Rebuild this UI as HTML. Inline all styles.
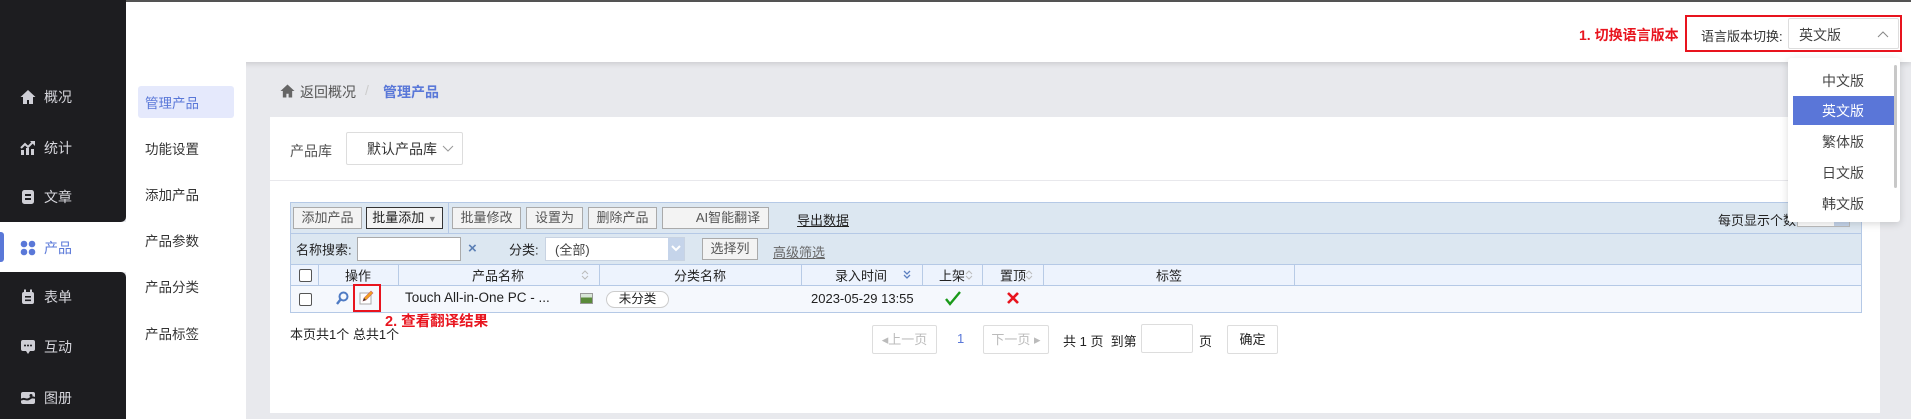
<!DOCTYPE html>
<html><head><meta charset="utf-8"><style>
*{margin:0;padding:0;box-sizing:border-box}
body{width:1911px;height:419px;overflow:hidden;background:#e8e9ed;font-family:"Liberation Sans","Noto Sans CJK SC",sans-serif;position:relative;color:#333}
.a{position:absolute;white-space:nowrap}
.topline{left:0;top:0;width:1911px;height:2px;background:#555}
.hdr{left:126px;top:2px;width:1785px;height:60px;background:#fff;box-shadow:0 2px 5px rgba(0,0,0,.12)}
.dk{background:#1d1d20;left:0;width:126px}
.nav{left:44px;font-size:14px;color:#d6d6dc;transform:translateY(-50%)}
.ic{left:20px;width:16px;height:16px;transform:translateY(-50%)}
.sub{left:126px;top:62px;width:120px;height:357px;background:#fff}
.si{left:145px;font-size:13.5px;color:#333;transform:translateY(-50%)}
.card{left:270px;top:117px;width:1610px;height:296px;background:#fff}
.btn{height:22px;border:1px solid #aaa;background:#f3f3f3;font-size:13px;color:#555;text-align:center;line-height:20px;top:207px}
.t13{font-size:13px;color:#222;transform:translateY(-50%)}
.vl{width:1px;background:#b8cbe6;top:265px;height:20px}
.dd{font-size:14px;color:#444;left:1788px;width:110px;text-align:center;transform:translateY(-50%)}
.pb{height:29px;border:1px solid #ddd;border-radius:2px;top:325px;font-size:13px;color:#bbb;text-align:center;line-height:27px;background:#fff}
.so{width:8px;height:12px}
</style></head><body>
<div class="a topline"></div>
<div class="a hdr"></div>
<div class="a dk" style="top:0;height:222px;border-bottom-right-radius:5px"></div>
<div class="a" style="left:0;top:222px;width:126px;height:50px;background:#fff"></div>
<div class="a dk" style="top:272px;height:147px;border-top-right-radius:5px"></div>
<div class="a" style="left:0;top:232px;width:4px;height:30px;background:#5a78d8;border-radius:0 3px 3px 0"></div>
<svg class="a ic" style="top:97px" viewBox="0 0 16 16"><path d="M8 1L0.5 8H3v7h4v-4h2v4h4V8h2.5z" fill="#cfcfd6"/></svg>
<div class="a nav" style="top:97px">概况</div>
<svg class="a ic" style="top:148px" viewBox="0 0 16 16" fill="#cfcfd6"><rect x="1" y="10" width="3" height="5"/><rect x="6" y="8" width="3" height="7"/><rect x="11" y="9" width="3" height="6"/><path d="M1 8l4-4 3 3 5-5" stroke="#cfcfd6" stroke-width="2" fill="none"/><path d="M10 1h5v5z"/></svg>
<div class="a nav" style="top:148px">统计</div>
<svg class="a ic" style="top:197px" viewBox="0 0 16 16"><rect x="2" y="1" width="12" height="14" rx="2.5" fill="#cfcfd6"/><rect x="5" y="5" width="6" height="2" fill="#1d1d20"/><rect x="5" y="9" width="6" height="2" fill="#1d1d20"/></svg>
<div class="a nav" style="top:197px">文章</div>
<svg class="a ic" style="top:248px" viewBox="0 0 16 16" fill="#5a78d8"><circle cx="4" cy="4" r="3.3"/><circle cx="12" cy="4" r="3.3"/><circle cx="4" cy="12" r="3.3"/><circle cx="12" cy="12" r="3.3"/></svg>
<div class="a nav" style="top:248px;color:#5a78d8">产品</div>
<svg class="a ic" style="top:297px" viewBox="0 0 16 16"><rect x="2" y="3" width="12" height="12" rx="2" fill="#cfcfd6"/><rect x="4" y="0.5" width="2" height="4" fill="#cfcfd6"/><rect x="10" y="0.5" width="2" height="4" fill="#cfcfd6"/><rect x="5" y="7" width="6" height="1.6" fill="#1d1d20"/><rect x="5" y="10.5" width="6" height="1.6" fill="#1d1d20"/></svg>
<div class="a nav" style="top:297px">表单</div>
<svg class="a ic" style="top:347px" viewBox="0 0 16 16"><path d="M1 3a2 2 0 012-2h10a2 2 0 012 2v7a2 2 0 01-2 2h-3l-2 3-2-3H3a2 2 0 01-2-2z" fill="#cfcfd6"/><circle cx="5" cy="6.5" r="1" fill="#1d1d20"/><circle cx="8" cy="6.5" r="1" fill="#1d1d20"/><circle cx="11" cy="6.5" r="1" fill="#1d1d20"/></svg>
<div class="a nav" style="top:347px">互动</div>
<svg class="a ic" style="top:398px" viewBox="0 0 16 16"><rect x="1" y="2" width="14" height="12" rx="2" fill="#cfcfd6"/><path d="M1 10c3-3 5 1 8-1s4-2 6-1" stroke="#1d1d20" stroke-width="2" fill="none"/><circle cx="11" cy="5.5" r="1.5" fill="#1d1d20"/></svg>
<div class="a nav" style="top:398px">图册</div>
<div class="a sub"></div>
<div class="a" style="left:138px;top:86px;width:96px;height:32px;background:#e5e9fc;border-radius:3px"></div>
<div class="a si" style="top:102px;color:#5a78d8">管理产品</div>
<div class="a si" style="top:148px">功能设置</div>
<div class="a si" style="top:194px">添加产品</div>
<div class="a si" style="top:240px">产品参数</div>
<div class="a si" style="top:286px">产品分类</div>
<div class="a si" style="top:333px">产品标签</div>
<svg class="a" style="left:280px;top:84px;width:15px;height:14px" viewBox="0 0 16 15"><path d="M8 0.5L0.5 7.5H3V14.5h3.8v-4h2.4v4H13V7.5h2.5z" fill="#666"/></svg>
<div class="a" style="left:300px;top:82px;font-size:14px;color:#555">返回概况</div>
<div class="a" style="left:365px;top:82px;font-size:14px;color:#ccc">/</div>
<div class="a" style="left:383px;top:82px;font-size:14px;color:#5a78d8;font-weight:bold">管理产品</div>
<div class="a card"></div>
<div class="a t13" style="left:290px;top:151px;color:#555;font-size:14px">产品库</div>
<div class="a" style="left:346px;top:132px;width:117px;height:33px;border:1px solid #ddd;border-radius:2px"></div>
<div class="a t13" style="left:367px;top:149px;font-size:14px;color:#333">默认产品库</div>
<svg class="a" style="left:442px;top:145px;width:12px;height:8px" viewBox="0 0 12 8"><path d="M1 1l5 5 5-5" stroke="#999" fill="none"/></svg>
<div class="a" style="left:270px;top:180px;width:1610px;height:1px;background:#e8e8ec"></div>
<div class="a" style="left:290px;top:202px;width:1572px;height:63px;background:#dce7f1;border:1px solid #b5c9e6"></div>
<div class="a" style="left:290px;top:233px;width:1572px;height:1px;background:#b5c9e6"></div>
<div class="a" style="left:448px;top:203px;width:1px;height:30px;background:#b5c9e6"></div>
<div class="a btn" style="left:293px;width:69px">添加产品</div>
<div class="a btn" style="left:366px;width:77px;border-color:#333;color:#222">批量添加 <span style="font-size:9px;color:#777">▼</span></div>
<div class="a btn" style="left:452px;width:69px">批量修改</div>
<div class="a btn" style="left:526px;width:57px">设置为</div>
<div class="a btn" style="left:588px;width:69px">删除产品</div>
<div class="a btn" style="left:662px;width:107px;padding-left:25px">AI智能翻译</div>
<div class="a" style="left:797px;top:210px;font-size:13px;color:#222;text-decoration:underline">导出数据</div>
<div class="a" style="left:1718px;top:210px;font-size:13px;color:#222">每页显示个数</div>
<div class="a" style="left:1797px;top:212px;width:53px;height:15px;border:1px solid #bbb;background:#fff"></div>
<div class="a" style="left:1834px;top:213px;width:15px;height:13px;background:#c5d4ea"></div>
<div class="a t13" style="left:296px;top:249px">名称搜索:</div>
<div class="a" style="left:357px;top:237px;width:104px;height:24px;background:#fff;border:1px solid #aaa"></div>
<div class="a" style="left:468px;top:240px;font-size:15px;color:#5b7fb5;font-weight:bold">×</div>
<div class="a t13" style="left:509px;top:249px">分类:</div>
<div class="a" style="left:545px;top:237px;width:140px;height:24px;background:#fff;border:1px solid #c8d3e2"></div>
<div class="a t13" style="left:555px;top:249px;color:#444">(全部)</div>
<div class="a" style="left:668px;top:238px;width:16px;height:22px;background:#c5d4ea"></div>
<svg class="a" style="left:671px;top:245px;width:10px;height:7px" viewBox="0 0 10 7"><path d="M1 1l4 4 4-4" stroke="#fff" stroke-width="2" fill="none"/></svg>
<div class="a btn" style="left:702px;top:238px;width:56px">选择列</div>
<div class="a" style="left:773px;top:242px;font-size:13px;color:#666;text-decoration:underline">高级筛选</div>
<div class="a" style="left:290px;top:265px;width:1572px;height:21px;background:#edf3fd;border-left:1px solid #b5c9e6;border-right:1px solid #b5c9e6;border-bottom:1px solid #b5c9e6"></div>
<div class="a vl" style="left:318px"></div><div class="a vl" style="left:398px"></div><div class="a vl" style="left:599px"></div><div class="a vl" style="left:801px"></div><div class="a vl" style="left:922px"></div><div class="a vl" style="left:982px"></div><div class="a vl" style="left:1043px"></div><div class="a vl" style="left:1294px"></div>
<div class="a" style="left:299px;top:269px;width:13px;height:13px;border:1px solid #555;border-radius:2px;background:#fff"></div>
<div class="a t13" style="left:345px;top:275px">操作</div>
<div class="a t13" style="left:472px;top:275px">产品名称</div>
<svg class="a so" style="left:581px;top:269px" viewBox="0 0 8 12"><path d="M1 5l3-3 3 3M1 7l3 3 3-3" stroke="#bbb" fill="none"/></svg>
<div class="a t13" style="left:674px;top:275px">分类名称</div>
<div class="a t13" style="left:835px;top:275px">录入时间</div>
<svg class="a so" style="left:903px;top:269px" viewBox="0 0 8 12"><path d="M1 2l3 3 3-3M1 6l3 3 3-3" stroke="#5b7fc0" stroke-width="1.3" fill="none"/></svg>
<div class="a t13" style="left:939px;top:275px">上架</div>
<svg class="a so" style="left:965px;top:269px" viewBox="0 0 8 12"><path d="M1 5l3-3 3 3M1 7l3 3 3-3" stroke="#bbb" fill="none"/></svg>
<div class="a t13" style="left:1000px;top:275px">置顶</div>
<svg class="a so" style="left:1025px;top:269px" viewBox="0 0 8 12"><path d="M1 5l3-3 3 3M1 7l3 3 3-3" stroke="#bbb" fill="none"/></svg>
<div class="a t13" style="left:1156px;top:275px">标签</div>
<div class="a" style="left:290px;top:286px;width:1572px;height:27px;background:#f5f8fd;border:1px solid #b5c9e6;border-top:none"></div>
<div class="a" style="left:299px;top:293px;width:13px;height:13px;border:1px solid #555;border-radius:2px;background:#fff"></div>
<svg class="a" style="left:336px;top:291px;width:13px;height:14px" viewBox="0 0 13 14"><circle cx="7.5" cy="5.5" r="4" stroke="#4f7bc4" stroke-width="2" fill="none"/><path d="M4.5 8.5L1 13" stroke="#4f7bc4" stroke-width="2.4"/></svg>
<div class="a" style="left:353px;top:284px;width:28px;height:28px;border:2px solid #e8141e"></div>
<svg class="a" style="left:359px;top:290px;width:15px;height:15px" viewBox="0 0 15 15"><rect x="1" y="3" width="11" height="11" fill="#fff" stroke="#aaa"/><path d="M4 11l1-3 7-7 2 2-7 7z" fill="#f3a31c" stroke="#c66" stroke-width=".6"/><path d="M4 11l1-3 2 2z" fill="#333"/></svg>
<div class="a" style="left:405px;top:290px;font-size:13.5px;color:#222">Touch All-in-One PC - ...</div>
<div class="a" style="left:580px;top:293px;width:13px;height:11px;border:1px solid #999;background:linear-gradient(#d8e6d8 40%,#5a8a3a 40%)"></div>
<div class="a" style="left:606px;top:291px;width:63px;height:17px;border:1px solid #ccc;border-radius:9px;background:#fff;font-size:12.5px;text-align:center;line-height:15px;color:#222">未分类</div>
<div class="a" style="left:811px;top:291px;font-size:13px;color:#222">2023-05-29 13:55</div>
<svg class="a" style="left:945px;top:291px;width:16px;height:15px" viewBox="0 0 16 15"><path d="M1 8l4 5L15 1" stroke="#1a9a1a" stroke-width="2.4" fill="none"/></svg>
<svg class="a" style="left:1007px;top:292px;width:12px;height:12px" viewBox="0 0 12 12"><path d="M1 1l10 10M11 1L1 11" stroke="#e8141e" stroke-width="2.6"/></svg>
<div class="a" style="left:385px;top:310px;font-size:14.5px;color:#e8141e;font-weight:bold">2. 查看翻译结果</div>
<div class="a" style="left:290px;top:324px;font-size:13px;color:#222">本页共1个 总共1个</div>
<div class="a pb" style="left:872px;width:65px">◂上一页</div>
<div class="a" style="left:957px;top:331px;font-size:13px;color:#5a78d8">1</div>
<div class="a pb" style="left:983px;width:66px">下一页 ▸</div>
<div class="a" style="left:1063px;top:331px;font-size:13px;color:#222">共 1 页 &nbsp;到第</div>
<div class="a" style="left:1141px;top:324px;width:52px;height:29px;border:1px solid #ddd;border-radius:2px"></div>
<div class="a" style="left:1199px;top:331px;font-size:13px;color:#222">页</div>
<div class="a pb" style="left:1227px;width:51px;color:#222">确定</div>
<div class="a" style="left:1579px;top:25px;font-size:14px;color:#e8141e;font-weight:bold">1. 切换语言版本</div>
<div class="a" style="left:1685px;top:15px;width:217px;height:37px;border:2px solid #e8141e"></div>
<div class="a" style="left:1701px;top:26px;font-size:13px;color:#333">语言版本切换:</div>
<div class="a" style="left:1788px;top:18px;width:111px;height:31px;border:1px solid #ddd;border-radius:2px;background:#fff"></div>
<div class="a" style="left:1799px;top:25px;font-size:14px;color:#444">英文版</div>
<svg class="a" style="left:1877px;top:31px;width:12px;height:7px" viewBox="0 0 12 7"><path d="M1 6l5-5 5 5" stroke="#888" fill="none"/></svg>
<div class="a" style="left:1788px;top:58px;width:112px;height:164px;background:#fff;border-radius:3px;box-shadow:0 2px 8px rgba(0,0,0,.15)"></div>
<div class="a" style="left:1793px;top:96px;width:101px;height:29px;background:#5a76d8"></div>
<div class="a" style="left:1894px;top:65px;width:3px;height:123px;background:#c8c8c8;border-radius:2px"></div>
<div class="a dd" style="top:81px">中文版</div>
<div class="a dd" style="top:111px;color:#fff">英文版</div>
<div class="a dd" style="top:142px">繁体版</div>
<div class="a dd" style="top:173px">日文版</div>
<div class="a dd" style="top:204px">韩文版</div>
</body></html>
